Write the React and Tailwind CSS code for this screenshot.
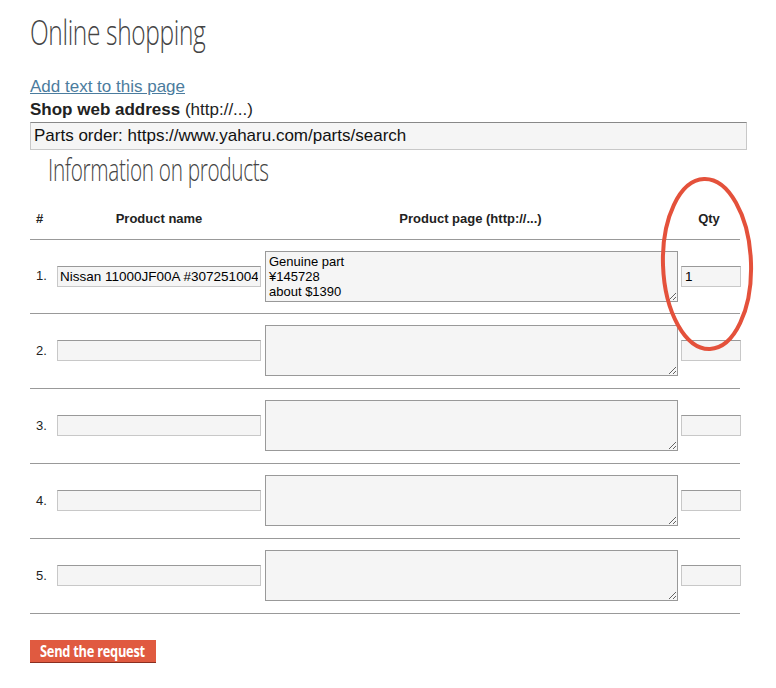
import React from 'react';

const rows = [
  { name: 'Nissan 11000JF00A #30725100461', page: 'Genuine part\n¥145728\nabout $1390', qty: '1' },
  { name: '', page: '', qty: '' },
  { name: '', page: '', qty: '' },
  { name: '', page: '', qty: '' },
  { name: '', page: '', qty: '' },
];

const field = 'bg-[#f5f5f5] border border-[#c8c8c8] border-t-[#999] text-[13.5px] text-black outline-none';

export default function App() {
  return (
    <div className="relative w-[776px] h-[688px] bg-white pl-[30px] pt-[11px] font-['Liberation_Sans',Arial,sans-serif] text-[#222]">
      <h1 className="h-[46px] text-[35px] leading-[42px] font-light text-[#444] font-['Open_Sans',sans-serif]">
        <span className="inline-block origin-left scale-x-[0.7] tracking-[-0.5px] whitespace-nowrap">Online shopping</span>
      </h1>

      <div className="mt-[18px]">
        <a href="#" className="text-[17px] leading-[21px] text-[#4b7c9e] underline">Add text to this page</a>
      </div>
      <div className="text-[17px] leading-[21px] text-[#222]">
        <b>Shop web address</b> (http://...)
      </div>
      <input
        readOnly
        value="Parts order: https://www.yaharu.com/parts/search"
        className="block w-[717px] h-[28px] mt-[2px] px-[3px] bg-[#f5f5f5] border border-[#c8c8c8] border-t-[#888] text-[17px] text-[#111] outline-none"
      />

      <h2 className="ml-[18px] mt-[1px] h-[44px] text-[31px] leading-[36px] font-light text-[#444] font-['Open_Sans',sans-serif]">
        <span className="inline-block origin-left scale-x-[0.67] tracking-[-0.5px] whitespace-nowrap">Information on products</span>
      </h2>

      <table className="w-[710px] border-collapse table-fixed mt-[4px]">
        <colgroup>
          <col className="w-[25px]" />
          <col className="w-[208px]" />
          <col className="w-[415px]" />
          <col className="w-[62px]" />
        </colgroup>
        <thead>
          <tr className="h-[40px] border-b border-[#999]">
            <th className="text-left pl-[6px] text-[13px] font-bold">#</th>
            <th className="text-[13px] font-bold">Product name</th>
            <th className="text-[13px] font-bold">Product page (http://...)</th>
            <th className="text-[13px] font-bold">Qty</th>
          </tr>
        </thead>
        <tbody>
          {rows.map((r, i) => (
            <tr key={i} className={`${i === 0 ? 'h-[74px]' : 'h-[75px]'} border-b border-[#999]`}>
              <td className="pl-[6px] text-[13px]">{i + 1}.</td>
              <td className="pl-[2px]">
                <input readOnly value={r.name} className={`${field} block w-[204px] h-[21px] px-[2px]`} />
              </td>
              <td className="pl-[2px]">
                <textarea
                  readOnly
                  value={r.page}
                  className="block w-[413px] h-[51px] px-[3px] py-[2px] bg-[#f5f5f5] border border-[#999] text-[13px] leading-[15px] text-black outline-none"
                />
              </td>
              <td className="pl-[3px]">
                <input readOnly value={r.qty} className={`${field} block w-[60px] h-[21px] px-[3px]`} />
              </td>
            </tr>
          ))}
        </tbody>
      </table>

      <button className="mt-[26px] h-[23px] w-[126px] bg-[#e05a40] border-b border-[#8a2f20] text-white font-bold text-[16px] leading-[22px] font-['Open_Sans',sans-serif] text-left pl-[10px] overflow-hidden">
        <span className="inline-block origin-left scale-x-[0.8] whitespace-nowrap tracking-[-0.3px]">Send the request</span>
      </button>

      <svg className="absolute left-0 top-0 pointer-events-none" width="776" height="688">
        <ellipse cx="707" cy="264" rx="44" ry="85" fill="none" stroke="#e4513b" strokeWidth="4" transform="rotate(-2 707 264)" />
      </svg>
    </div>
  );
}
